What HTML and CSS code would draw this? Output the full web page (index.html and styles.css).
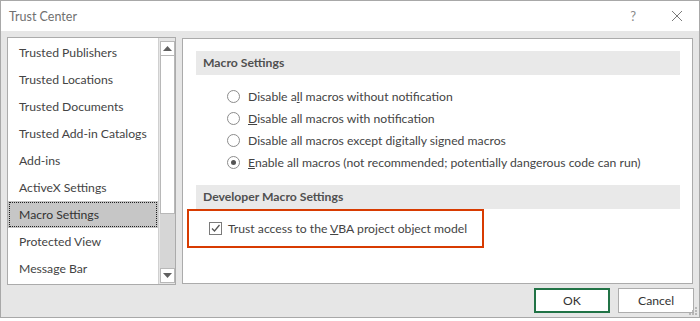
FILE: index.html
```html
<!DOCTYPE html>
<html lang="en">
<head>
    <meta charset="UTF-8">
    <title>Trust Center</title>
    <link rel="stylesheet" href="styles.css">
</head>
<body>
    <div class="dialog">
        <div class="titlebar">
            <span class="title">Trust Center</span>
            <span class="help">?</span>
            <svg class="close" width="12" height="12" viewBox="0 0 12 12"><path d="M1 1 L11 11 M11 1 L1 11" stroke="#7a7a7a" stroke-width="1" fill="none"/></svg>
        </div>

        <div class="main">
            <div class="listbox">
                <ul class="nav">
                    <li>Trusted Publishers</li>
                    <li>Trusted Locations</li>
                    <li>Trusted Documents</li>
                    <li>Trusted Add-in Catalogs</li>
                    <li>Add-ins</li>
                    <li>ActiveX Settings</li>
                    <li class="selected">Macro Settings</li>
                    <li>Protected View</li>
                    <li>Message Bar</li>
                </ul>
                <div class="scrollbar">
                    <div class="sb-btn"><svg width="9" height="5" viewBox="0 0 9 5"><path d="M4.5 0 L9 5 L0 5 Z" fill="#606060"/></svg></div>
                    <div class="sb-thumb"></div>
                    <div class="sb-track"></div>
                    <div class="sb-btn"><svg width="9" height="5" viewBox="0 0 9 5"><path d="M0 0 L9 0 L4.5 5 Z" fill="#606060"/></svg></div>
                </div>
            </div>

            <div class="panel">
                <div class="section-head">Macro Settings</div>
                <div class="options">
                    <label class="radio-row"><span class="radio"></span><span>Disable a<u>l</u>l macros without notification</span></label>
                    <label class="radio-row"><span class="radio"></span><span><u>D</u>isable all macros with notification</span></label>
                    <label class="radio-row"><span class="radio"></span><span>Disable all macros except di<u>g</u>itally signed macros</span></label>
                    <label class="radio-row"><span class="radio checked"></span><span><u>E</u>nable all macros (not recommended; potentially dangerous code can run)</span></label>
                </div>
                <div class="section-head">Developer Macro Settings</div>
                <div class="highlight">
                    <label class="check-row">
                        <span class="checkbox"><svg width="11" height="11" viewBox="0 0 11 11"><path d="M2 5.5 L4.5 8 L9.5 2" stroke="#555" stroke-width="1.3" fill="none"/></svg></span>
                        <span>Trust access to the <u>V</u>BA project object model</span>
                    </label>
                </div>
            </div>
        </div>

        <div class="footer">
            <button class="btn btn-ok">OK</button>
            <button class="btn">Cancel</button>
        </div>
        <svg class="grip" width="8" height="8" viewBox="0 0 8 8">
            <rect x="6" y="0" width="2" height="2" fill="#b8b8b8"/>
            <rect x="3" y="3" width="2" height="2" fill="#b8b8b8"/>
            <rect x="6" y="3" width="2" height="2" fill="#b8b8b8"/>
            <rect x="0" y="6" width="2" height="2" fill="#b8b8b8"/>
            <rect x="3" y="6" width="2" height="2" fill="#b8b8b8"/>
            <rect x="6" y="6" width="2" height="2" fill="#b8b8b8"/>
        </svg>
    </div>
</body>
</html>
```

FILE: styles.css
```css
* { margin: 0; padding: 0; box-sizing: border-box; }
body { background: #fff; font-family: Lato, 'Liberation Sans', sans-serif; font-size: 12.2px; color: #444; }

.dialog {
    position: relative; width: 700px; height: 318px;
    background: #e6e6e6; border: 1px solid #a8a8a8;
    display: flex; flex-direction: column;
}

.titlebar {
    height: 30px; background: #fff; display: flex; align-items: center;
    padding: 0 0 0 8px;
}
.title { flex: 1; color: #707070; font-size: 12.5px; }
.help { color: #8a8a8a; font-size: 13px; margin-right: 35px; }
.close { margin-right: 16px; }

.main { display: flex; gap: 6px; margin: 6px 6px 0 6px; height: 248px; }

.listbox {
    width: 169px; border: 1px solid #ababab; background: #fff;
    display: flex;
}
.nav { list-style: none; flex: 1; padding-top: 1px; }
.nav li { height: 27px; line-height: 27px; padding-left: 11px; }
.nav li.selected { background: #c6c6c6; outline: 1px dotted #222; outline-offset: -2px; color: #333; }

.scrollbar {
    width: 17px; background: #e6e6e6; border-left: 1px solid #d0d0d0;
    display: flex; flex-direction: column; padding: 3px 0 1px 1px;
}
.sb-btn {
    height: 15px; background: #fff; border: 1px solid #b8b8b8;
    display: flex; align-items: center; justify-content: center;
}
.sb-thumb { height: 158px; background: #fff; border: 1px solid #b8b8b8; border-top: none; }
.sb-track { flex: 1; background: #d6d6d6; }

.panel { flex: 1; border: 1px solid #ababab; background: #fff; padding: 12px 12px 0 13px; margin-top: 1px; margin-bottom: 1px; }

.section-head {
    height: 24px; line-height: 24px; background: #e9e9e9;
    padding-left: 7px; font-weight: bold; color: #505050;
}
.options { padding: 10px 0 12px 31px; }
.radio-row { display: flex; align-items: center; height: 22px; }
.radio {
    width: 13px; height: 13px; border: 1px solid #8c8c8c; border-radius: 50%;
    margin-right: 8px; display: flex; align-items: center; justify-content: center;
}
.radio.checked::after { content: ""; width: 5px; height: 5px; border-radius: 50%; background: #555; }

.highlight {
    width: 297px; height: 39px; margin-left: -9px;
    border: 2px solid #d83b01; display: flex; align-items: center; padding-left: 20px;
}
.check-row { display: flex; align-items: center; }
.checkbox {
    width: 13px; height: 13px; border: 1px solid #7a7a7a; margin-right: 6px;
    display: flex; align-items: center; justify-content: center;
}

.footer { display: flex; justify-content: flex-end; gap: 8px; padding: 3px 5px 0 0; }
.btn {
    width: 76px; height: 25px; background: #fff; border: 1px solid #adadad;
    font-family: inherit; font-size: 12.2px; color: #333;
}
.btn-ok { border: 2px solid #217346; }

.grip { position: absolute; right: 2px; bottom: 2px; }
```
